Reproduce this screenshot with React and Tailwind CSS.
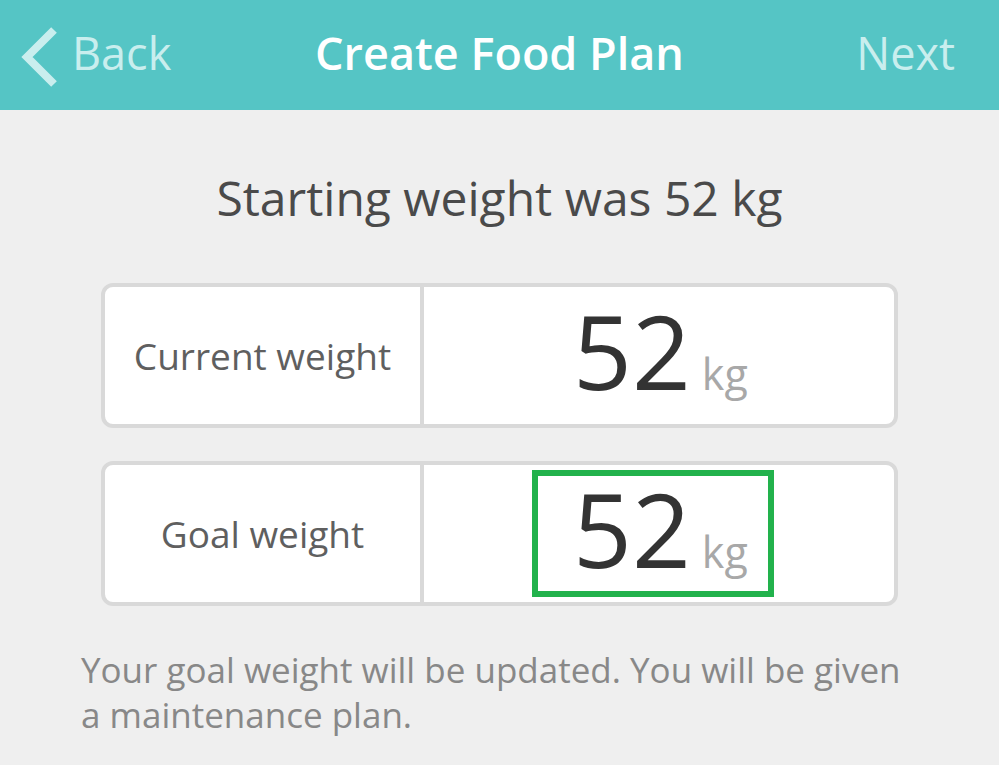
import React from "react";

const font = { fontFamily: "'Open Sans', Lato, sans-serif" };

function WeightRow({ label, value, unit, active }) {
  return (
    <div className="flex h-[145px] rounded-[12px] border-4 border-[#d9d9d9] bg-white">
      <div className="w-[319px] shrink-0 flex items-center justify-center border-r-4 border-[#d9d9d9] text-[37px] text-[#5f5f5f]">
        {label}
      </div>
      <div className="flex-1 flex items-center pl-[108px]">
        <div
          className={
            "w-[242px] h-[127px] border-[6px] flex items-baseline pl-[35px] " +
            (active ? "border-[#22b24c]" : "border-transparent")
          }
        >
          <span className="text-[103px] leading-[105px] text-[#333333]">{value}</span>
          <span className="text-[43px] leading-[50px] text-[#a8a8a8] ml-[11px]">{unit}</span>
        </div>
      </div>
    </div>
  );
}

export default function App() {
  return (
    <div className="w-[999px] h-[765px] bg-[#efefef] overflow-hidden" style={font}>
      {/* header */}
      <div className="h-[110px] bg-[#55c5c5] grid grid-cols-[1fr_auto_1fr] items-center pb-[5px]">
        <div className="flex items-center pl-[20px] text-[#c9eeee] text-[45px] leading-none">
          <svg width="40" height="60" viewBox="0 0 40 60" className="mt-[8px]">
            <path d="M34 3 L7 30 L34 57" fill="none" stroke="#c9eeee" strokeWidth="8" />
          </svg>
          <span className="ml-[12px]">Back</span>
        </div>
        <div className="text-white text-[45px] leading-none font-semibold">Create Food Plan</div>
        <div className="text-[#c9eeee] text-[45px] leading-none text-right pr-[44px]">Next</div>
      </div>

      <div className="pt-[64px] text-center text-[48px] text-[#4a4a4a] leading-none">
        Starting weight was 52 kg
      </div>

      <div className="px-[101px] pt-[61px] flex flex-col gap-[33px]">
        <WeightRow label="Current weight" value="52" unit="kg" />
        <WeightRow label="Goal weight" value="52" unit="kg" active />
      </div>

      <div className="px-[81px] pt-[41px] text-[35px] leading-[45px] text-[#888888]">
        Your goal weight will be updated. You will be given a maintenance plan.
      </div>
    </div>
  );
}
